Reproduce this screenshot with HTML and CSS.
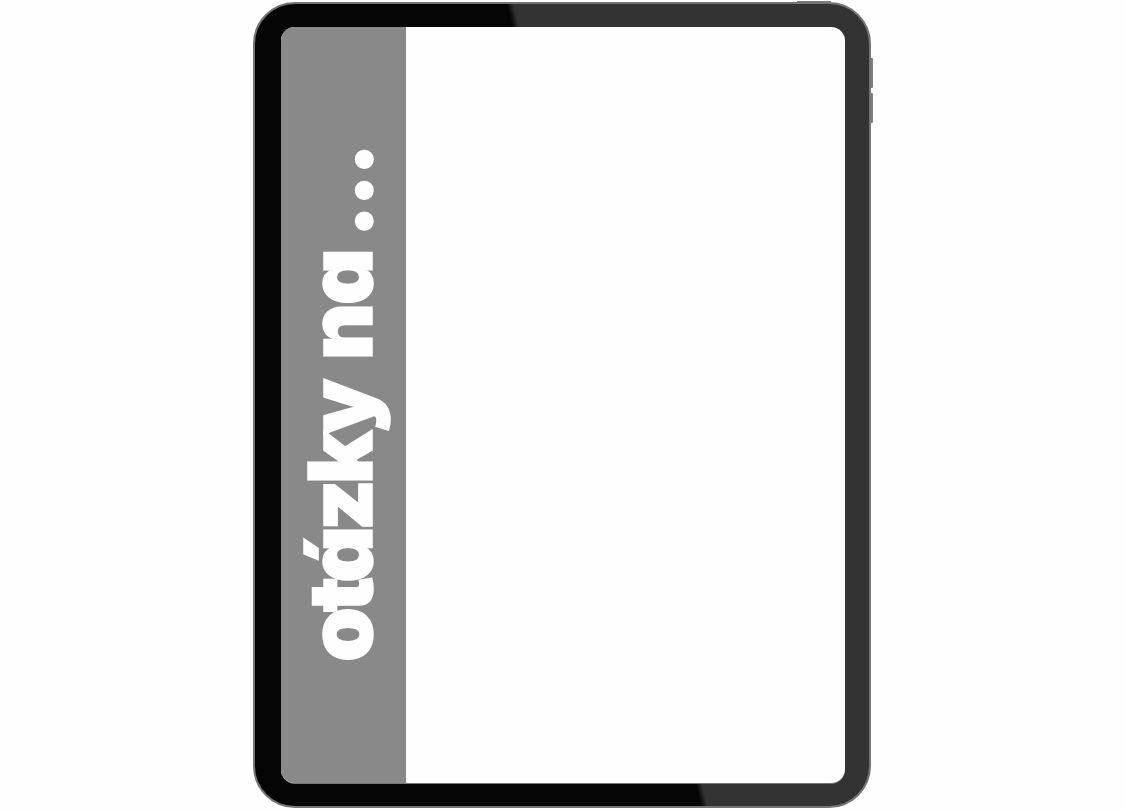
FILE: index.html
```html
<!DOCTYPE html>
<html lang="cs">
<head>
  <meta charset="UTF-8" />
  <meta name="viewport" content="width=device-width, initial-scale=1.0"/>
  <title>Otázky na ...</title>
  <link rel="stylesheet" href="styles.css">
</head>
<body>
  <div class="tablet">
    <span class="btn btn-top"></span>
    <span class="btn btn-vol-up"></span>
    <span class="btn btn-vol-down"></span>
    <div class="screen">
      <div class="sidebar">
        <h1>otázky <span class="na">na</span> <span class="dots">...</span></h1>
      </div>
      <div class="content"></div>
    </div>
  </div>
</body>
</html>
```

FILE: styles.css
```css
html, body {
  height: 100%;
}

body {
  margin: 0;
  background: #fefefe;
  font-family: "Inter", "Liberation Sans", sans-serif;
  display: flex;
  justify-content: center;
  overflow: hidden;
}

.tablet {
  position: relative;
  box-sizing: border-box;
  width: 618px;
  height: 806px;
  margin: 2px 0 0 -1px;
  padding: 23px 24px 23px 26px;
  border-radius: 42px;
  border: 2px solid #747474;
  background: linear-gradient(76.4deg, #050505 55.2%, #333 56%);
}

.btn {
  position: absolute;
  background: #808080;
}

.btn-top {
  top: -3px;
  right: 38px;
  width: 34px;
  height: 1px;
}

.btn-vol-up {
  top: 54px;
  right: -4px;
  width: 2px;
  height: 30px;
  border-radius: 0 1px 1px 0;
}

.btn-vol-down {
  top: 89px;
  right: -4px;
  width: 2px;
  height: 30px;
  border-radius: 0 1px 1px 0;
}

.screen {
  display: flex;
  height: 100%;
  border-radius: 14px;
  overflow: hidden;
  background: #fefefe;
  box-shadow: 0 1px 0 #777;
}

.sidebar {
  box-sizing: border-box;
  width: 125px;
  padding-bottom: 121px;
  background: #898989;
  display: flex;
  justify-content: center;
  align-items: flex-end;
}

.sidebar h1 {
  margin: 0 0 0 -6px;
  writing-mode: vertical-rl;
  transform: rotate(180deg);
  color: #fefefe;
  font-size: 88px;
  font-weight: 900;
  font-feature-settings: "cv11";
  letter-spacing: -5px;
  line-height: 125px;
  white-space: nowrap;
  -webkit-text-stroke: 1.5px #fefefe;
}

.na {
  margin-inline-start: 11px;
  letter-spacing: -2px;
}

.dots {
  letter-spacing: -2px;
}

.content {
  flex: 1;
}
```
